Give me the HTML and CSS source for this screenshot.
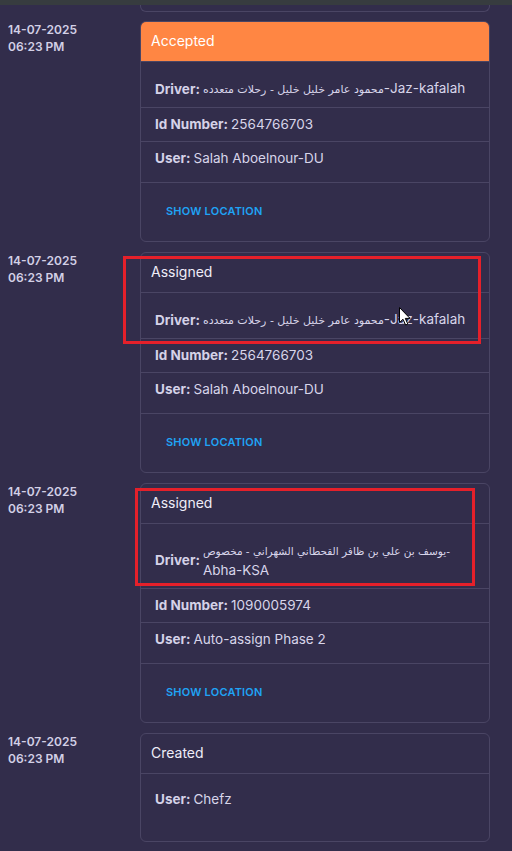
FILE: index.html
```html
<!DOCTYPE html>
<html lang="en">
<head>
<meta charset="utf-8">
<title>Order timeline</title>
<link rel="stylesheet" href="styles.css">
</head>
<body>
<div class="topbar"></div>
<div class="timeline">
  <div class="stub"></div>

  <div class="item">
    <div class="when"><div>14-07-2025</div><div>06:23 PM</div></div>
    <div class="card">
      <div class="card-head head-accepted">Accepted</div>
      <div class="card-list">
        <div class="row"><span class="label">Driver:</span><span class="value driver"><span class="ar">محمود عامر خليل خليل - رحلات متعدده</span>-Jaz-kafalah</span></div>
        <div class="row"><span class="label">Id Number:</span><span class="value">2564766703</span></div>
        <div class="row"><span class="label">User:</span><span class="value">Salah Aboelnour-DU</span></div>
      </div>
      <div class="card-actions"><span class="link">SHOW LOCATION</span></div>
    </div>
  </div>

  <div class="item">
    <div class="when"><div>14-07-2025</div><div>06:23 PM</div></div>
    <div class="card">
      <div class="card-head">Assigned</div>
      <div class="card-list">
        <div class="row"><span class="label">Driver:</span><span class="value driver"><span class="ar">محمود عامر خليل خليل - رحلات متعدده</span>-Jaz-kafalah</span></div>
        <div class="row"><span class="label">Id Number:</span><span class="value">2564766703</span></div>
        <div class="row"><span class="label">User:</span><span class="value">Salah Aboelnour-DU</span></div>
      </div>
      <div class="card-actions"><span class="link">SHOW LOCATION</span></div>
    </div>
  </div>

  <div class="item">
    <div class="when"><div>14-07-2025</div><div>06:23 PM</div></div>
    <div class="card">
      <div class="card-head">Assigned</div>
      <div class="card-list">
        <div class="row"><span class="label">Driver:</span><span class="value driver"><span class="ar ar-long">يوسف بن علي بن ظافر القحطاني الشهراني - مخصوص-</span><br>Abha-KSA</span></div>
        <div class="row"><span class="label">Id Number:</span><span class="value">1090005974</span></div>
        <div class="row"><span class="label">User:</span><span class="value">Auto-assign Phase 2</span></div>
      </div>
      <div class="card-actions"><span class="link">SHOW LOCATION</span></div>
    </div>
  </div>

  <div class="item">
    <div class="when"><div>14-07-2025</div><div>06:23 PM</div></div>
    <div class="card">
      <div class="card-head">Created</div>
      <div class="card-list list-only">
        <div class="row"><span class="label">User:</span><span class="value">Chefz</span></div>
      </div>
    </div>
  </div>
</div>

<div class="mark mark-one"></div>
<div class="mark mark-two"></div>
<svg class="cursor" width="12" height="19" viewBox="0 0 12 19" aria-hidden="true">
  <path d="M0.5 0.5 L0.5 15.5 L4 12.2 L6.6 18 L8.8 17 L6.3 11.4 L11 11.4 Z" fill="#ffffff" stroke="#000000" stroke-width="1" stroke-linejoin="round"/>
</svg>
</body>
</html>
```

FILE: styles.css
```css
* { box-sizing: border-box; }

html, body {
  margin: 0;
  padding: 0;
  background: #322d4b;
  height: 851px;
  overflow: hidden;
}

body {
  font-family: "Inter", "DejaVu Sans", sans-serif;
  color: rgba(231, 227, 252, 0.87);
  position: relative;
}

.topbar {
  height: 5px;
  background: #373c3f;
}

.timeline {
  padding-left: 8px;
}

.stub {
  margin-left: 132px;
  width: 350px;
  height: 7px;
  border: 1px solid #4a4564;
  border-top: none;
  border-radius: 0 0 6px 6px;
  margin-bottom: 9px;
}

.item {
  display: flex;
  margin-bottom: 10px;
}

.when {
  width: 132px;
  flex: none;
  font-size: 12px;
  font-weight: 600;
  line-height: 17px;
  color: #d3d0e6;
}

.card {
  width: 350px;
  flex: none;
  border: 1px solid #4a4564;
  border-radius: 6px;
  overflow: hidden;
}

.card-head {
  padding: 10px 10px 11px;
  font-size: 14px;
  line-height: 18px;
  color: #eeecf8;
  border-bottom: 1px solid #4a4564;
}

.head-accepted {
  background: #ff8643;
  color: #ffffff;
  margin: -1px -1px 0;
  padding: 11px 11px 11px;
}

.card-list {
  padding: 9px 0 7px;
  border-bottom: 1px solid #4a4564;
}

.card-list.list-only {
  border-bottom: none;
  padding-bottom: 25px;
}

.row {
  display: flex;
  align-items: center;
  gap: 3px;
  padding: 8px 14px;
  font-size: 13.5px;
  line-height: 17px;
}

.row + .row {
  border-top: 1px solid #4a4564;
}

.label {
  font-weight: 700;
  color: #d5d2e8;
  white-space: nowrap;
}

.value {
  color: #d8d5ea;
}

.driver {
  line-height: 19px;
}

.ar {
  font-family: "DejaVu Sans", sans-serif;
  font-size: 11px;
}

.ar-long {
  font-size: 10.5px;
}

.card-actions {
  height: 58px;
  display: flex;
  align-items: center;
  padding: 0 0 3px 25px;
}

.link {
  font-size: 11px;
  font-weight: 600;
  letter-spacing: 0.2px;
  color: #1fa3f5;
}

.mark {
  position: absolute;
  border: 3px solid #e5202a;
}

.mark-one {
  left: 123px;
  top: 256px;
  width: 358px;
  height: 88px;
}

.mark-two {
  left: 135px;
  top: 488px;
  width: 340px;
  height: 98px;
}

.cursor {
  position: absolute;
  left: 399px;
  top: 307px;
}
```
